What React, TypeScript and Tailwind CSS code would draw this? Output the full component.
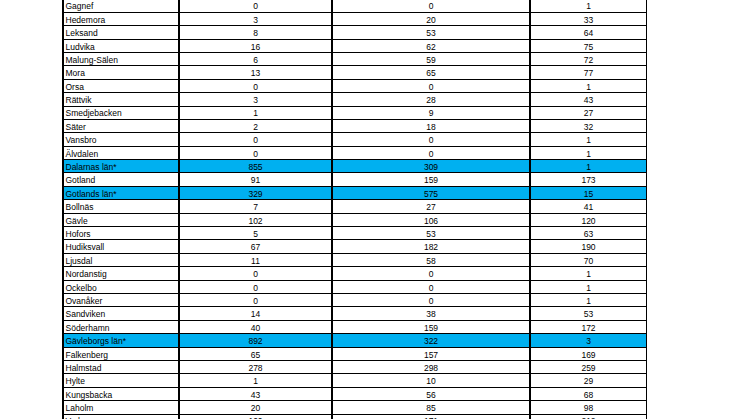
import React from "react";

type Row = { name: string; a: string; b: string; c: string; total?: boolean };

const rows: Row[] = [
  { name: "Gagnef", a: "0", b: "0", c: "1" },
  { name: "Hedemora", a: "3", b: "20", c: "33" },
  { name: "Leksand", a: "8", b: "53", c: "64" },
  { name: "Ludvika", a: "16", b: "62", c: "75" },
  { name: "Malung-Sälen", a: "6", b: "59", c: "72" },
  { name: "Mora", a: "13", b: "65", c: "77" },
  { name: "Orsa", a: "0", b: "0", c: "1" },
  { name: "Rättvik", a: "3", b: "28", c: "43" },
  { name: "Smedjebacken", a: "1", b: "9", c: "27" },
  { name: "Säter", a: "2", b: "18", c: "32" },
  { name: "Vansbro", a: "0", b: "0", c: "1" },
  { name: "Älvdalen", a: "0", b: "0", c: "1" },
  { name: "Dalarnas län*", a: "855", b: "309", c: "1", total: true },
  { name: "Gotland", a: "91", b: "159", c: "173" },
  { name: "Gotlands län*", a: "329", b: "575", c: "15", total: true },
  { name: "Bollnäs", a: "7", b: "27", c: "41" },
  { name: "Gävle", a: "102", b: "106", c: "120" },
  { name: "Hofors", a: "5", b: "53", c: "63" },
  { name: "Hudiksvall", a: "67", b: "182", c: "190" },
  { name: "Ljusdal", a: "11", b: "58", c: "70" },
  { name: "Nordanstig", a: "0", b: "0", c: "1" },
  { name: "Ockelbo", a: "0", b: "0", c: "1" },
  { name: "Ovanåker", a: "0", b: "0", c: "1" },
  { name: "Sandviken", a: "14", b: "38", c: "53" },
  { name: "Söderhamn", a: "40", b: "159", c: "172" },
  { name: "Gävleborgs län*", a: "892", b: "322", c: "3", total: true },
  { name: "Falkenberg", a: "65", b: "157", c: "169" },
  { name: "Halmstad", a: "278", b: "298", c: "259" },
  { name: "Hylte", a: "1", b: "10", c: "29" },
  { name: "Kungsbacka", a: "43", b: "56", c: "68" },
  { name: "Laholm", a: "20", b: "85", c: "98" },
  { name: "Varberg", a: "100", b: "171", c: "212" },
];

const App = () => {
  return (
    <div className="w-[746px] h-[419px] overflow-hidden bg-white font-['Liberation_Sans',Arial,sans-serif] text-[8.5px] text-black">
      <div className="ml-[62px] -mt-[1.6px] w-[585px] border-l-2 border-t border-black">
        {rows.map((r) => (
          <div
            key={r.name}
            className={`grid grid-cols-[116px_153px_198px_116px] h-[13.4px] border-b border-black leading-none ${
              r.total ? "bg-[#00b0f0]" : "bg-white"
            }`}
          >
            {/* name column */}
            <div className="flex items-center pl-[1.5px] pt-[2px] border-r-2 border-black whitespace-nowrap">
              {r.name}
            </div>
            <div className="flex items-center justify-center pt-[2px] border-r-2 border-black">{r.a}</div>
            <div className="flex items-center justify-center pt-[2px] border-r-2 border-black">{r.b}</div>
            <div className="flex items-center justify-center pt-[2px] border-r border-black">{r.c}</div>
          </div>
        ))}
      </div>
    </div>
  );
};

export default App;
